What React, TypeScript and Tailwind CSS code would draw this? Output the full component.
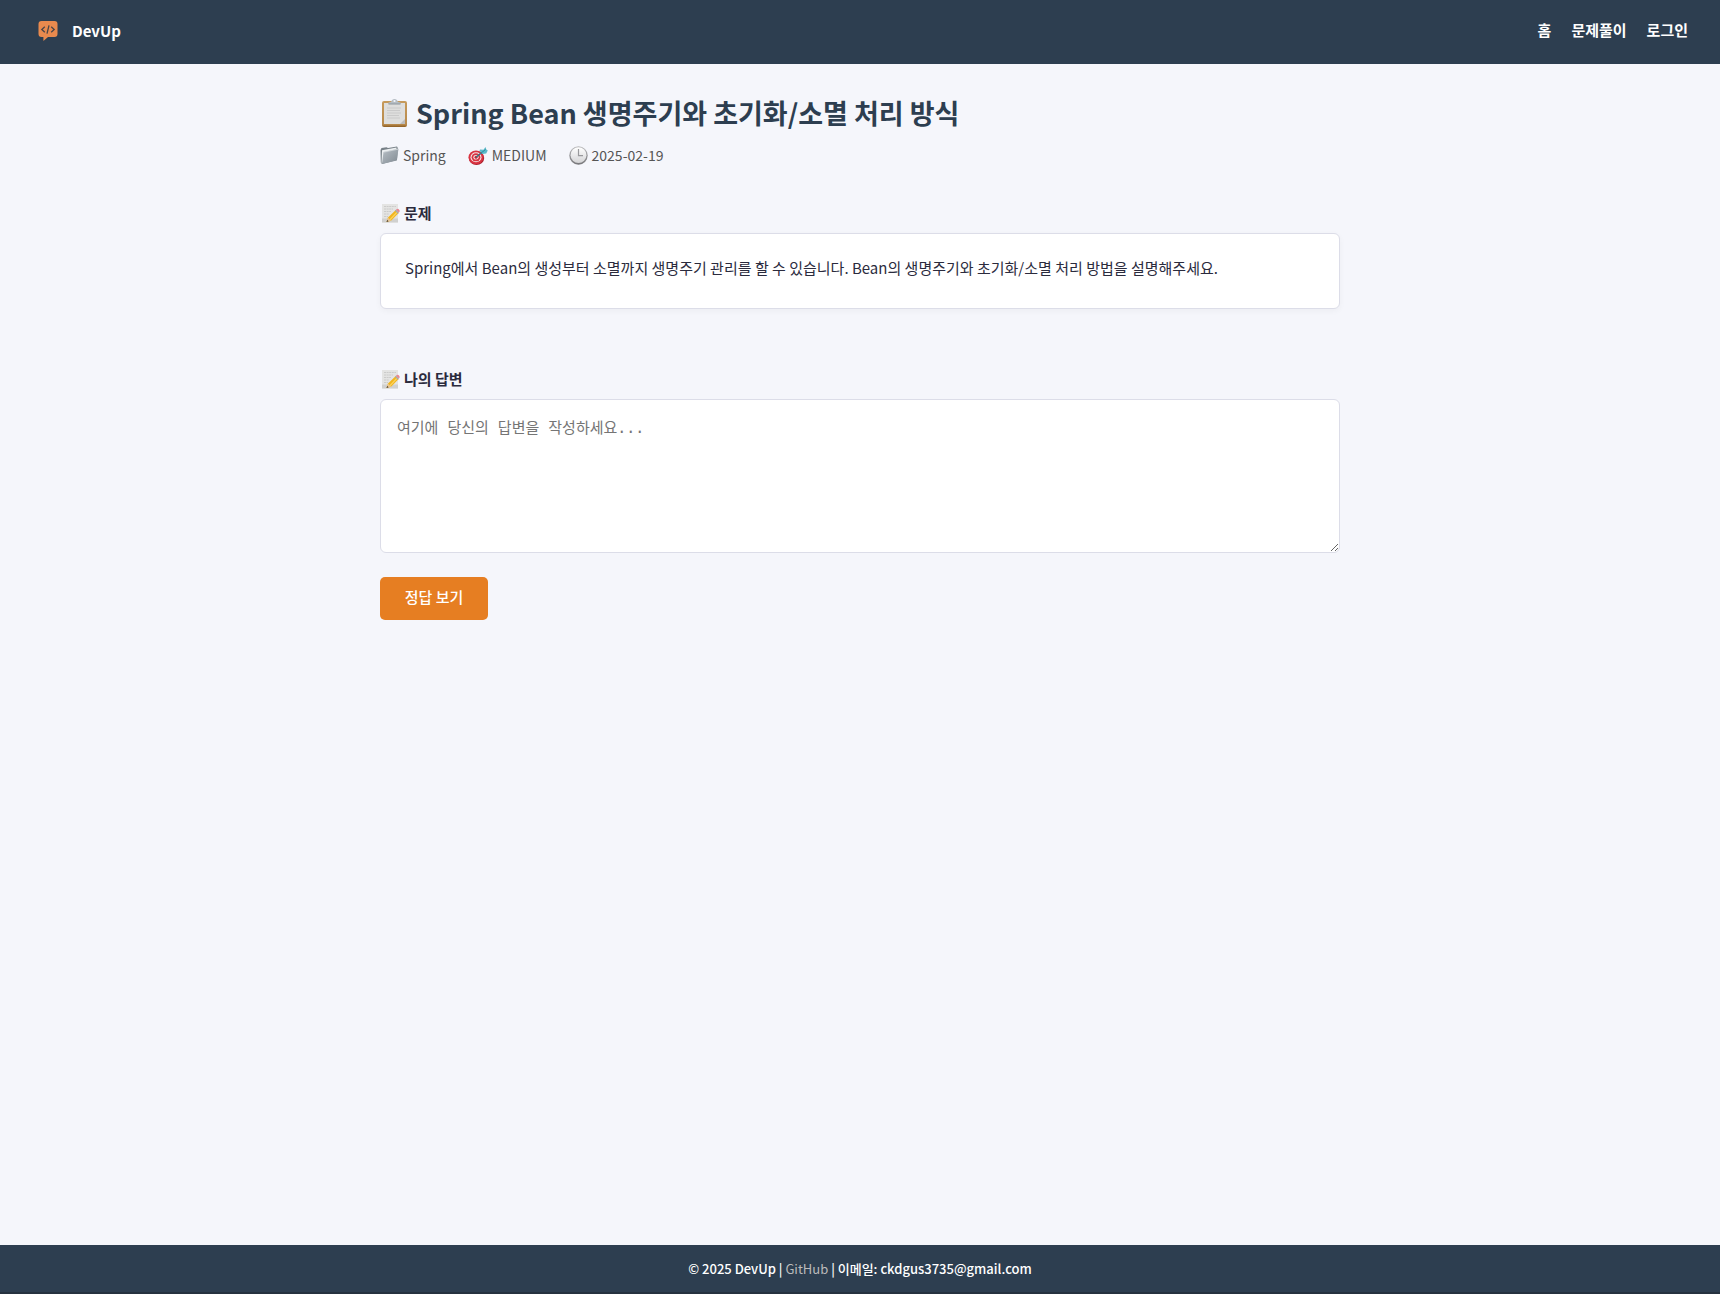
import React from "react";

function Logo() {
  return (
    <svg viewBox="0 0 20 20" className="size-5" aria-hidden="true">
      <path d="M3.5 0h13Q19.5 0 19.5 3v10q0 3-3 3H10l-4.600 4V16H3.500q-3 0-3-3V3q0-3 3-3z" fill="#e98a4e" />
      <path d="M6.800 5.800 3.800 8.500l3 2.800M13.200 5.800l3 2.700-3 2.800M11 4.300l-2 8.400" fill="none" stroke="#4a4547" strokeWidth="1.300" />
    </svg>
  );
}

function Clipboard() {
  return (
    <svg viewBox="0 0 28 30" className="h-[30px] w-7 shrink-0" aria-hidden="true">
      <defs>
        <linearGradient id="board" x2="0" y2="1">
          <stop offset="0" stopColor="#c69a5b" />
          <stop offset="0.900" stopColor="#b88a4c" />
          <stop offset="1" stopColor="#8d5d22" />
        </linearGradient>
      </defs>
      <rect x="2" y="3" width="25" height="26" rx="2" fill="url(#board)" />
      <path d="M4 5h21v21H4z" fill="#dededd" />
      <path d="M20 26l5-5v5z" fill="#bcbcbc" />
      <path d="M7 10h14M7 12.500h13M7 15h14M7 17.500h12M7 20h13" stroke="#cacaca" strokeWidth="1" />
      <path d="M8 6q0-2 3-2 1-3 3.500-3T18 4q3 0 3 2z" fill="#b5bdc4" />
      <circle cx="14.500" cy="3" r="1.100" fill="#f5f6fb" />
      <path d="M8.500 6h12" stroke="#8d969e" />
    </svg>
  );
}

function Folder() {
  return (
    <svg viewBox="0 0 19 19" className="size-[19px] shrink-0" aria-hidden="true">
      <defs>
        <linearGradient id="folder" x2="1" y2="1">
          <stop offset="0" stopColor="#b9c0c7" />
          <stop offset="1" stopColor="#7f8991" />
        </linearGradient>
      </defs>
      <path d="M.5 4 1.500 2l5-.8L8 2l9-1.500.8 1.500-.8 12L2 18 .800 16.500z" fill="#778087" />
      <path d="M2 4.300 16.500 1.500 16 13.500 1.500 17z" fill="#eceff1" />
      <path d="M3.500 6 18.500 2.800 16.800 14.500 2 18z" fill="url(#folder)" />
      <path d="M3.700 6.200 18 3.200" stroke="#d7dce0" strokeWidth=".7" />
    </svg>
  );
}

function Target() {
  return (
    <svg viewBox="0 0 20 19" className="h-[19px] w-5 shrink-0" aria-hidden="true">
      <ellipse cx="8.500" cy="12" rx="7.700" ry="7" fill="#a91e2b" />
      <ellipse cx="8" cy="11.300" rx="7.500" ry="6.900" fill="#d93341" />
      <ellipse cx="8" cy="11.300" rx="5.500" ry="5" fill="#f4e8e8" />
      <ellipse cx="8" cy="11.300" rx="4.400" ry="4" fill="#d93341" />
      <ellipse cx="8" cy="11.300" rx="2.600" ry="2.300" fill="#f4e8e8" />
      <circle cx="8" cy="11.300" r="1.500" fill="#c92532" />
      <path d="M8 11.300 15 5.500" stroke="#37727f" strokeWidth="1.400" />
      <path d="M11.500 5 12 3.500l3.500.3L17.500 1l.8 2.600 1.500.9-1.600 3-3.700.4-1.500-1.500z" fill="#5ab9c9" />
      <path d="M12.500 7.500 17.500 3.500" stroke="#278798" strokeWidth=".9" />
    </svg>
  );
}

function Clock() {
  return (
    <svg viewBox="0 0 19 19" className="size-[19px] shrink-0" aria-hidden="true">
      <defs>
        <linearGradient id="rim" x2="0" y2="1">
          <stop offset="0" stopColor="#b9b9bb" />
          <stop offset="1" stopColor="#77777a" />
        </linearGradient>
        <linearGradient id="dial" x2="0" y2="1">
          <stop offset="0" stopColor="#ffffff" />
          <stop offset="1" stopColor="#d4d4d6" />
        </linearGradient>
      </defs>
      <circle cx="9.500" cy="9.500" r="9.200" fill="url(#rim)" />
      <circle cx="9.500" cy="9.200" r="7.900" fill="url(#dial)" />
      <path d="M9.500 3v6.700h4.500" fill="none" stroke="#99999c" strokeWidth="1.200" />
    </svg>
  );
}

function Memo() {
  return (
    <svg viewBox="0 0 20 20" className="size-5 shrink-0" aria-hidden="true">
      <path d="M2 1h16v18.500H2z" fill="#e4e4e3" />
      <path d="M2 15.500h16v4H2z" fill="#d0d0cf" />
      <path d="M4 3.500h12M4 6h9M4 8.500h7M4 11h5M4 13.500h4" stroke="#c4c4c4" strokeWidth=".8" strokeDasharray="2 .6" />
      <path d="M6.500 19 8 14.600 15.800 7.100 18.700 10 11 17.800z" fill="#f2b51d" />
      <path d="M9.800 16.800 17.300 8.800" stroke="#fbd560" strokeWidth="1.200" />
      <path d="M6.500 19 8 14.600l3 3.200z" fill="#e8c595" />
      <path d="m6.500 19 .7-2.100 1.400 1.400z" fill="#35302c" />
      <path d="m15 7.800 1-1 2.900 2.900-1 1.100z" fill="#9faab2" />
      <path d="m16 6.800.8-.8q1.300-.5 2.200.4t.6 2.300l-.8.900z" fill="#e88791" />
    </svg>
  );
}

export default function App() {
  return (
    <div className="flex min-h-screen flex-col bg-[#f5f6fb] font-['Noto_Sans_CJK_KR',sans-serif] text-[15px] leading-6 text-[#2b2b3d]">
      <header className="flex h-16 items-center justify-between bg-[#2d3e50] px-8 font-bold text-white">
        <a href="#" className="flex items-center gap-3.5 pb-0.5 pl-1.5">
          <Logo />
          <span>DevUp</span>
        </a>
        <nav className="flex gap-5 pb-1">
          <a href="#home">홈</a>
          <a href="#problems">문제풀이</a>
          <a href="#login">로그인</a>
        </nav>
      </header>

      <main className="mx-auto w-full max-w-[960px] flex-1 pt-[31px]">
        <h1 className="flex items-center gap-2 text-[27px] leading-9 font-bold text-[#2d3e50]">
          <Clipboard />
          Spring Bean 생명주기와 초기화/소멸 처리 방식
        </h1>
        <div className="mt-3 flex gap-[22px] text-sm leading-6 text-[#555555]">
          <span className="flex items-center gap-1"><Folder />Spring</span>
          <span className="flex items-center gap-1"><Target />MEDIUM</span>
          <span className="flex items-center gap-1"><Clock />2025-02-19</span>
        </div>

        <section className="mt-[34px]">
          <h2 className="flex items-center gap-1 font-bold"><Memo />문제</h2>
          <div className="mt-2 rounded-md border border-[#dcdde8] bg-white px-6 pt-[22px] pb-7 shadow-[0_2px_6px_rgba(0,0,0,0.04)]">
            <p>Spring에서 Bean의 생성부터 소멸까지 생명주기 관리를 할 수 있습니다. Bean의 생명주기와 초기화/소멸 처리 방법을 설명해주세요.</p>
          </div>
        </section>

        <section className="mt-[58px]">
          <label htmlFor="answer" className="flex items-center gap-1 font-bold"><Memo />나의 답변</label>
          <textarea
            id="answer"
            placeholder="여기에 당신의 답변을 작성하세요..."
            className="mt-2 block h-[154px] w-full resize-y rounded-md border border-[#dcdde8] bg-white p-4 font-['DejaVu_Sans_Mono','Noto_Sans_CJK_KR',monospace] leading-6 placeholder:text-[#757575]"
          />
          <button type="button" className="mt-6 block h-[43px] min-w-[108px] rounded-[5px] bg-[#e67e22] px-6 pb-1 font-medium text-white">
            정답 보기
          </button>
        </section>
      </main>

      <footer className="h-[49px] border-b-2 border-[#26323f] bg-[#2d3e50] text-center text-[13px] leading-[47px] font-medium text-white">
        © 2025 DevUp | <a href="#github" className="font-normal text-[#bbbbbb]">GitHub</a> | 이메일: ckdgus3735@gmail.com
      </footer>
    </div>
  );
}
